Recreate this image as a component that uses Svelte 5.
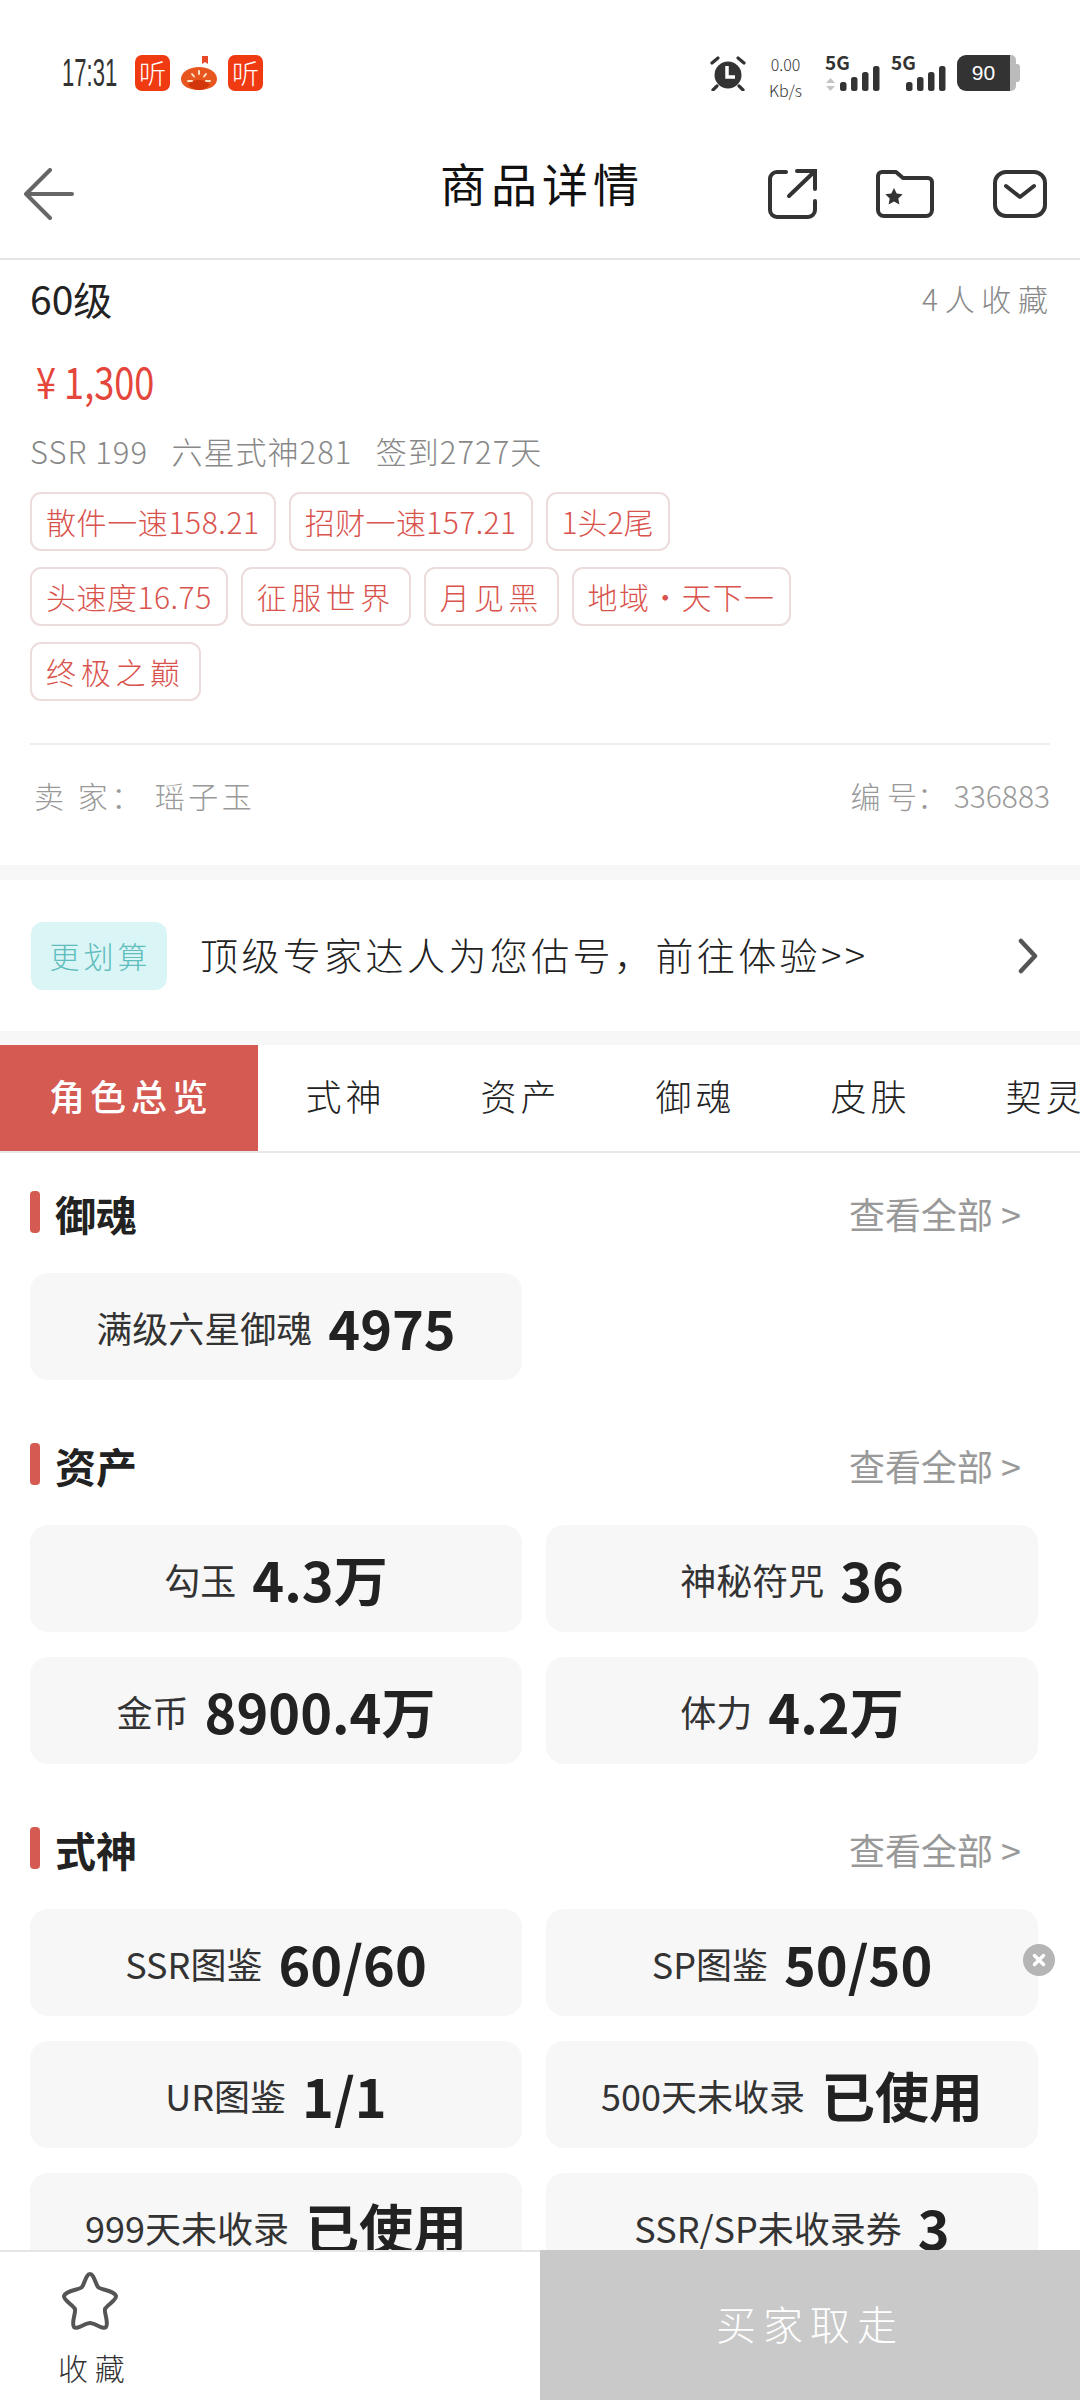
<script>
	// tag text + extra letter spacing so widths land on the reference
	const tagRows = [
		[["散件一速158.21", 0.6], ["招财一速157.21", 0.4], ["1头2尾", 0]],
		[["头速度16.75", 0.5], ["征服世界", 4.5], ["月见黑", 4.3], ["地域·天下一", 1.3]],
		[["终极之巅", 4.7]]
	];
	const tabs = ["式神", "资产", "御魂", "皮肤", "契灵"];
	const sections = [
		{ title: "御魂", items: [["满级六星御魂", "4975"]] },
		{
			title: "资产",
			items: [
				["勾玉", "4.3万"],
				["神秘符咒", "36"],
				["金币", "8900.4万"],
				["体力", "4.2万"]
			]
		},
		{
			title: "式神",
			items: [
				["SSR图鉴", "60/60"],
				["SP图鉴", "50/50"],
				["UR图鉴", "1/1"],
				["500天未收录", "已使用"],
				["999天未收录", "已使用"],
				["SSR/SP未收录券", "3"]
			]
		}
	];
	const bars = [
		[15, 9],
		[26, 14],
		[37, 19],
		[48, 25]
	];
</script>

<div class="page">
	<div class="status">
		<div class="status-left">
			<span class="time"><span>17:31</span></span>
			<span class="app red">听</span>
			<svg class="app-svg" viewBox="0 0 36 36" width="36" height="36">
				<rect width="36" height="36" rx="7" fill="#fff" />
				<path d="M21 1h6v8l-3-2-3 2z" fill="#e8492a" />
				<path d="M0 24c0-7 8-12 18-12s18 5 18 12c0 7-8 11-18 11S0 31 0 24z" fill="#e8561f" />
				<path d="M7 30c3-4 7-5 11-5s8 1 11 5c-3 3-7 5-11 5s-8-2-11-5z" fill="#d2360b" />
				<path d="M18 16v3M11 19l2 2.500M25 19l-2 2.500M7 26h4M25 26h4" stroke="#ffe3c9" stroke-width="2" stroke-linecap="round" />
			</svg>
			<span class="app red">听</span>
		</div>
		<div class="status-right">
			<svg width="36" height="36" viewBox="0 0 36 36" fill="#333">
				<circle cx="18" cy="20" r="13.500" />
				<path d="M2 8l6-5M34 8l-6-5M7 31l-4 4M29 31l4 4" stroke="#333" stroke-width="3.200" stroke-linecap="round" />
				<path d="M17 11v11h8" stroke="#fff" stroke-width="3.500" fill="none" />
			</svg>
			<div class="speed"><span>0.00</span><span>Kb/s</span></div>
			<div class="net">
				<b>5G</b>
				<svg width="55" height="36" viewBox="0 0 55 36" fill="#333">
					<path d="M1 28l4.500-5 4.500 5zM1 31l4.500 5 4.500-5z" fill="#c4c4c4" />
					{#each bars as b}
						<rect x={b[0]} y={36 - b[1]} width="6.500" height={b[1]} rx="2.500" />
					{/each}
				</svg>
			</div>
			<div class="net">
				<b>5G</b>
				<svg width="55" height="36" viewBox="0 0 55 36" fill="#333">
					{#each bars as b}
						<rect x={b[0]} y={36 - b[1]} width="6.500" height={b[1]} rx="2.500" />
					{/each}
				</svg>
			</div>
			<div class="battery"><span>90</span><i></i></div>
		</div>
	</div>

	<header class="nav">
		<svg class="back" width="50" height="52" viewBox="0 0 50 52" fill="none" stroke="#666" stroke-width="4" stroke-linecap="round" stroke-linejoin="round">
			<path d="M48 26H2M26 2L2 26l24 24" />
		</svg>
		<h1>商品详情</h1>
		<div class="nav-icons">
			<svg width="50" height="50" viewBox="0 0 50 50" fill="none" stroke="#333" stroke-width="4" stroke-linecap="round">
				<path d="M19 3H10a7 7 0 0 0-7 7v31a7 7 0 0 0 7 7h31a7 7 0 0 0 7-7v-9" />
				<path d="M22 27L47 3M30 2h18v18" />
			</svg>
			<svg width="58" height="48" viewBox="0 0 58 48" fill="none" stroke="#333" stroke-width="4" stroke-linejoin="round">
				<path d="M2 6a4 4 0 0 1 4-4h14l7 6h25a4 4 0 0 1 4 4v28a6 6 0 0 1-6 6H8a6 6 0 0 1-6-6z" />
				<path d="M18 18l2.700 5.500 6 .8-4.400 4.200 1.100 6-5.400-2.900-5.400 2.900 1.100-6-4.400-4.200 6-.8z" fill="#333" stroke="none" />
			</svg>
			<svg width="54" height="48" viewBox="0 0 54 48" fill="none" stroke="#333" stroke-width="4" stroke-linecap="round" stroke-linejoin="round">
				<rect x="2" y="2" width="50" height="44" rx="11" />
				<path d="M13 16l14 11 14-11" />
			</svg>
		</div>
	</header>

	<section class="info">
		<div class="level-row">
			<span class="level">60级</span>
			<span class="fav-count">4 人 收 藏</span>
		</div>
		<div class="price">¥ 1,300</div>
		<div class="stats">SSR 199&nbsp;&nbsp;&nbsp;六星式神281&nbsp;&nbsp;&nbsp;签到2727天</div>
		<div class="tags">
			{#each tagRows as row}
				<div class="tag-row">
					{#each row as tag}
						<span class="tag" style="letter-spacing: {tag[1]}px">{tag[0]}</span>
					{/each}
				</div>
			{/each}
		</div>
		<div class="seller">
			<span class="seller-name">卖 家： 瑶子玉</span>
			<span>编 号： 336883</span>
		</div>
	</section>

	<section class="banner">
		<span class="badge">更划算</span>
		<span class="banner-text">顶级专家达人为您估号，前往体验&gt;&gt;</span>
		<svg width="22" height="36" viewBox="0 0 22 36" fill="none" stroke="#555" stroke-width="4.500" stroke-linecap="round" stroke-linejoin="round">
			<path d="M4 3l14 15L4 33" />
		</svg>
	</section>

	<nav class="tabs">
		<span class="tab active">角色总览</span>
		{#each tabs as tab}
			<span class="tab">{tab}</span>
		{/each}
	</nav>

	<main class="content">
		{#each sections as s}
			<section class="block">
				<div class="block-head">
					<h2>{s.title}</h2>
					<span class="more">查看全部 &gt;</span>
				</div>
				<div class="cards">
					{#each s.items as item}
						<div class="card">
							<span class="label">{item[0]}</span>
							<span class="value">{item[1]}</span>
						</div>
					{/each}
				</div>
			</section>
		{/each}
	</main>

	<div class="close-dot">
		<svg width="18" height="18" viewBox="0 0 18 18" stroke="#fff" stroke-width="3.500" stroke-linecap="round">
			<path d="M4.500 4.500l9 9M13.500 4.500l-9 9" />
		</svg>
	</div>

	<footer class="bottom">
		<div class="fav">
			<svg width="60" height="60" viewBox="0 0 60 60" fill="none" stroke="#555" stroke-width="4" stroke-linejoin="round">
				<path d="M30 2c4 0 5 9 8 13 2 3 16 3 18 9 1 4-9 9-11 13-1 4 4 14 1 18-3 3-11-4-16-4s-13 7-16 4c-3-4 2-14 1-18-2-4-12-9-11-13 2-6 16-6 18-9 3-4 4-13 8-13z" />
			</svg>
			<span>收 藏</span>
		</div>
		<div class="buy">买家取走</div>
	</footer>
</div>

<style>
	:global(body) {
		background: #fff;
	}

	.page {
		position: relative;
		width: 1080px;
		height: 2400px;
		overflow: hidden;
		background: #fff;
		font-family: "Noto Sans CJK SC", "Noto Sans", sans-serif;
		font-weight: 300;
		color: #222;
	}

	.status {
		height: 130px;
		padding: 55px 60px 0 62px;
		box-sizing: border-box;
		display: flex;
		justify-content: space-between;
		align-items: flex-start;
	}

	.status-left {
		display: flex;
		align-items: center;
		gap: 11px;
		height: 36px;
	}

	.time {
		display: block;
		width: 62px;
		height: 36px;
		font-family: "Liberation Sans", sans-serif;
		font-size: 38px;
		line-height: 36px;
		color: #333;
		white-space: nowrap;
	}

	.time span {
		display: inline-block;
		transform: scaleX(0.58);
		transform-origin: left center;
	}

	.app {
		width: 35px;
		height: 36px;
		border-radius: 7px;
		font-size: 27px;
		line-height: 36px;
		text-align: center;
	}

	.red {
		background: #f03a12;
		color: #fff;
	}

	.app-svg {
		display: block;
	}

	.status-right {
		display: flex;
		align-items: flex-start;
		height: 36px;
	}

	.speed {
		display: flex;
		flex-direction: column;
		align-items: center;
		width: 31px;
		margin: -4px 0 0 24px;
		font-size: 16px;
		line-height: 26px;
		color: #333;
		white-space: nowrap;
	}

	.net {
		position: relative;
		width: 55px;
		height: 36px;
		margin-left: 11px;
	}

	.speed + .net {
		margin-left: 24px;
	}

	.net b {
		position: absolute;
		left: 0;
		top: -3px;
		font-size: 19px;
		line-height: 20px;
		font-weight: 700;
		color: #333;
	}

	.net svg {
		position: absolute;
		left: 0;
		bottom: 0;
	}

	.battery {
		position: relative;
		display: flex;
		align-items: center;
		justify-content: center;
		width: 53px;
		height: 36px;
		margin: 0 10px 0 11px;
		box-sizing: border-box;
		border-radius: 9px 0 0 9px;
		background: #333;
		color: #fff;
		font-family: "Liberation Sans", sans-serif;
		font-size: 21px;
	}

	.battery i {
		position: absolute;
		left: 53px;
		top: 0;
		width: 6px;
		height: 36px;
		background: #bbb;
		border-radius: 0 5px 5px 0;
	}

	.battery i::after {
		content: "";
		position: absolute;
		left: 6px;
		top: 9px;
		width: 4px;
		height: 18px;
		background: #bbb;
		border-radius: 0 3px 3px 0;
	}

	.nav {
		position: relative;
		height: 130px;
		box-sizing: border-box;
		display: flex;
		align-items: center;
		justify-content: space-between;
		padding: 0 33px 0 24px;
		border-bottom: 2px solid #e4e4e4;
	}

	h1 {
		position: absolute;
		left: 4px;
		right: 0;
		top: 25px;
		margin: 0;
		text-align: center;
		font-size: 46px;
		line-height: 54px;
		letter-spacing: 5px;
		font-weight: 400;
		color: #111;
	}

	.nav-icons {
		display: flex;
		align-items: center;
		gap: 59px;
	}

	.info {
		padding: 0 30px;
		height: 605px;
		box-sizing: border-box;
	}

	.level-row {
		display: flex;
		justify-content: space-between;
		align-items: center;
		height: 74px;
		padding-top: 2px;
		box-sizing: border-box;
	}

	.level {
		font-size: 39px;
		color: #222;
		font-weight: 400;
	}

	.fav-count {
		font-size: 30px;
		color: #888;
		margin-right: 2px;
	}

	.price {
		margin: 16px 0 0 6px;
		height: 60px;
		line-height: 60px;
		font-size: 44px;
		color: #e5463c;
		font-weight: 400;
		transform: scaleX(0.82);
		transform-origin: left center;
	}

	.stats {
		margin-top: 18px;
		height: 46px;
		line-height: 46px;
		font-size: 31px;
		letter-spacing: 1px;
		color: #888;
		white-space: nowrap;
	}

	.tags {
		margin-top: 18px;
		display: flex;
		flex-direction: column;
		gap: 16px;
	}

	.tag-row {
		display: flex;
		gap: 13px;
	}

	.tag {
		height: 59px;
		box-sizing: border-box;
		border: 2px solid #ecdcdc;
		border-radius: 11px;
		padding: 0 14px;
		line-height: 55px;
		font-size: 30px;
		color: #d9534d;
		white-space: nowrap;
	}

	.seller {
		margin-top: 42px;
		padding: 0 0 0 4px;
		height: 100px;
		border-top: 2px solid #eeeeee;
		display: flex;
		justify-content: space-between;
		align-items: center;
		font-size: 30px;
		color: #999;
	}

	.seller-name {
		letter-spacing: 3.500px;
	}

	.banner {
		border-top: 15px solid #f7f7f7;
		border-bottom: 14px solid #f7f7f7;
		height: 180px;
		box-sizing: border-box;
		display: flex;
		align-items: center;
		padding: 0 41px 0 31px;
	}

	.badge {
		width: 136px;
		height: 68px;
		border-radius: 12px;
		background: #daf5f5;
		color: #5fbdbd;
		font-size: 30px;
		line-height: 66px;
		text-align: center;
		letter-spacing: 4px;
		padding-left: 3px;
		box-sizing: border-box;
	}

	.banner-text {
		flex: 1;
		margin: -5px 0 0 33px;
		font-size: 38px;
		letter-spacing: 3.400px;
		color: #222;
		white-space: nowrap;
	}

	.tabs {
		display: flex;
		height: 108px;
		box-sizing: border-box;
		border-bottom: 2px solid #e8e8e8;
		white-space: nowrap;
	}

	.tab {
		flex: 0 0 175px;
		text-align: center;
		font-size: 36px;
		line-height: 100px;
		letter-spacing: 4px;
		color: #222;
	}

	.tab.active {
		flex: 0 0 258px;
		background: #d45a52;
		color: #fff;
		font-weight: 500;
		letter-spacing: 5px;
		padding-left: 4px;
		box-sizing: border-box;
	}

	.content {
		padding: 0 41px 0 30px;
		font-weight: 400;
	}

	.block {
		padding-top: 32px;
		margin-bottom: 25px;
	}

	.block-head {
		display: flex;
		justify-content: space-between;
		align-items: center;
		height: 56px;
		margin-bottom: 32px;
		padding-right: 18px;
	}

	h2 {
		margin: 0;
		padding-left: 25px;
		position: relative;
		font-size: 41px;
		line-height: 56px;
		font-weight: 700;
		color: #222;
	}

	h2::before {
		content: "";
		position: absolute;
		left: 0;
		top: 6px;
		width: 10px;
		height: 42px;
		border-radius: 4px;
		background: #d45a52;
	}

	.more {
		font-size: 36px;
		color: #999;
	}

	.cards {
		display: grid;
		grid-template-columns: repeat(2, 492px);
		column-gap: 24px;
		row-gap: 25px;
	}

	.card {
		height: 107px;
		border-radius: 18px;
		background: #f7f7f7;
		display: flex;
		align-items: center;
		justify-content: center;
		gap: 16px;
		white-space: nowrap;
	}

	.label {
		font-size: 36px;
		color: #333;
	}

	.value {
		font-size: 54px;
		font-weight: 700;
		color: #222;
	}

	.close-dot {
		position: absolute;
		left: 1023px;
		top: 1944px;
		width: 32px;
		height: 32px;
		border-radius: 50%;
		background: #b5b5b5;
		display: flex;
		align-items: center;
		justify-content: center;
	}

	.bottom {
		position: absolute;
		left: 0;
		right: 0;
		top: 2250px;
		height: 150px;
		display: flex;
		background: #fff;
		border-top: 2px solid #e6e6e6;
		box-sizing: border-box;
	}

	.fav {
		flex: 0 0 540px;
		box-sizing: border-box;
		padding: 20px 0 0 60px;
		display: flex;
		flex-direction: column;
		align-items: flex-start;
		gap: 17px;
		font-size: 30px;
		color: #333;
	}

	.fav span {
		margin-left: -2px;
		line-height: 36px;
	}

	.buy {
		flex: 1;
		margin-top: -2px;
		background: #c9c9c9;
		color: #fff;
		font-size: 40px;
		letter-spacing: 7px;
		text-align: center;
		line-height: 146px;
	}
</style>
